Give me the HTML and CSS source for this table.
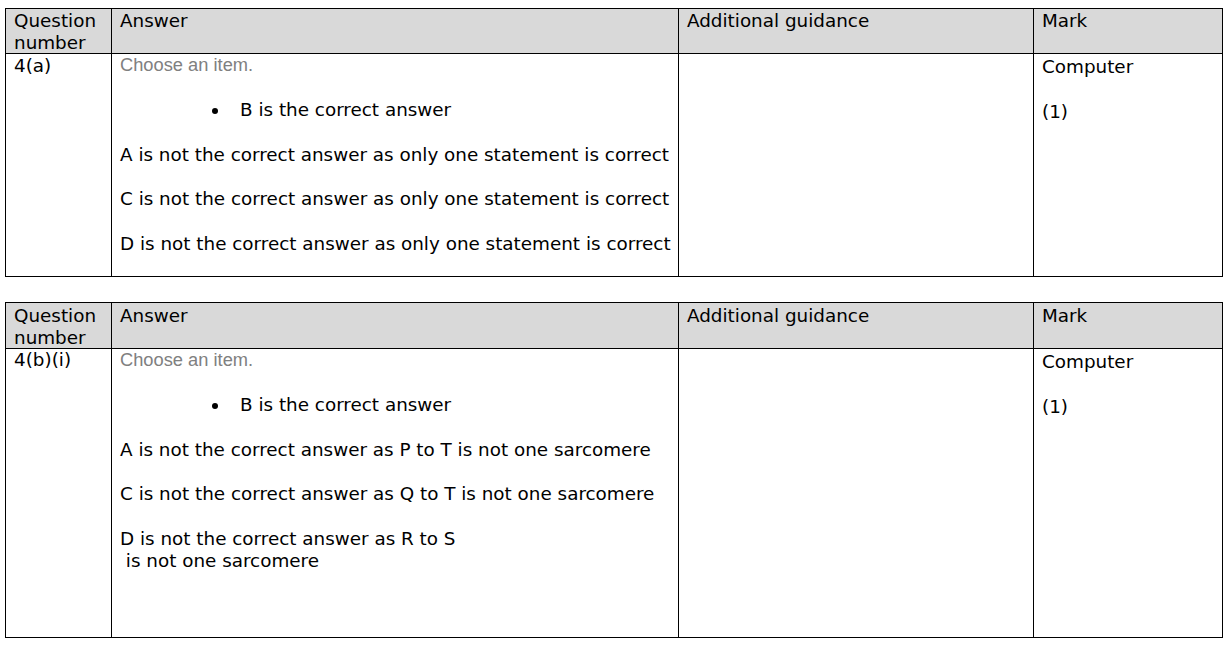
FILE: index.html
```html
<!DOCTYPE html>
<html>
<head>
<meta charset="utf-8">
<link rel="stylesheet" href="styles.css">
</head>
<body>
<table class="ms">
  <colgroup>
    <col class="c-q"><col class="c-a"><col class="c-g"><col class="c-m">
  </colgroup>
  <thead>
    <tr class="hd">
      <th>Question number</th>
      <th>Answer</th>
      <th>Additional guidance</th>
      <th>Mark</th>
    </tr>
  </thead>
  <tbody>
    <tr class="body1">
      <td class="qn">4(a)</td>
      <td class="ans">
        <p class="choose">Choose an item.</p>
        <ul class="bul"><li>B is the correct answer</li></ul>
        <p class="ln">A is not the correct answer as only one statement is correct</p>
        <p class="ln">C is not the correct answer as only one statement is correct</p>
        <p class="ln">D is not the correct answer as only one statement is correct</p>
      </td>
      <td></td>
      <td class="mark">
        <p class="mk">Computer</p>
        <p class="mk">(1)</p>
      </td>
    </tr>
  </tbody>
</table>

<table class="ms second">
  <colgroup>
    <col class="c-q"><col class="c-a"><col class="c-g"><col class="c-m">
  </colgroup>
  <thead>
    <tr class="hd hd2">
      <th>Question number</th>
      <th>Answer</th>
      <th>Additional guidance</th>
      <th>Mark</th>
    </tr>
  </thead>
  <tbody>
    <tr class="body2">
      <td class="qn">4(b)(i)</td>
      <td class="ans">
        <p class="choose">Choose an item.</p>
        <ul class="bul"><li>B is the correct answer</li></ul>
        <p class="ln">A is not the correct answer as P to T is not one sarcomere</p>
        <p class="ln">C is not the correct answer as Q to T is not one sarcomere</p>
        <p class="ln">D is not the correct answer as R to S<br>&nbsp;is not one sarcomere</p>
      </td>
      <td></td>
      <td class="mark">
        <p class="mk">Computer</p>
        <p class="mk">(1)</p>
      </td>
    </tr>
  </tbody>
</table>
</body>
</html>
```
FILE: styles.css
```css
html, body {
  margin: 0;
  padding: 0;
  background: #ffffff;
}
body {
  padding: 8px 8px 0 5px;
  font-family: "DejaVu Sans", Verdana, sans-serif;
  font-size: 18.35px;
  line-height: 22px;
  color: #000;
}
.ms {
  border-collapse: collapse;
  table-layout: fixed;
  width: 1217px;
}
.second {
  margin-top: 25px;
}
.c-q { width: 106px; }
.c-a { width: 567px; }
.c-g { width: 355px; }
.c-m { width: 189px; }
.ms th, .ms td {
  border: 1px solid #000;
  vertical-align: top;
  text-align: left;
  padding: 0 8px 0 8px;
  font-weight: normal;
}
.ms td.ans {
  padding-right: 0;
}
.hd th {
  background: #d9d9d9;
  height: 43px;
  padding-top: 1px;
  line-height: 21.5px;
}
.hd2 th {
  height: 43px;
  padding-top: 2px;
}
.body1 td { height: 221px; }
.body2 td { height: 288px; }
.ans p, .ans ul, .mark p {
  margin: 0;
}
.body1 .qn {
  padding-top: 1px;
}
.choose {
  font-family: "Liberation Sans", Arial, sans-serif;
  font-size: 18.3px;
  color: #808080;
}
.bul {
  padding: 0;
  margin: 23px 0 0 0 !important;
  list-style: none;
}
.bul li {
  position: relative;
  padding-left: 120px;
}
.bul li::before {
  content: "";
  position: absolute;
  left: 92px;
  top: 9px;
  width: 6px;
  height: 6px;
  border-radius: 50%;
  background: #000;
}
.ln {
  margin-top: 22.5px !important;
  white-space: nowrap;
}
.mk {
  padding-top: 2px;
}
.mk + .mk {
  margin-top: 21px !important;
}
```
